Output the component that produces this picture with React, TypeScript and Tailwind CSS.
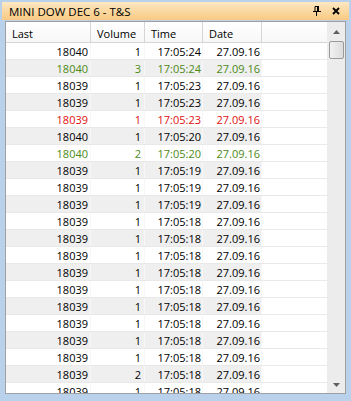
import { ReactNode } from "react";

type Row = { last: string; vol: string; time: string; color?: "green" | "red" };

const rows: Row[] = [
  { last: "18040", vol: "1", time: "17:05:24" },
  { last: "18040", vol: "3", time: "17:05:24", color: "green" },
  { last: "18039", vol: "1", time: "17:05:23" },
  { last: "18039", vol: "1", time: "17:05:23" },
  { last: "18039", vol: "1", time: "17:05:23", color: "red" },
  { last: "18040", vol: "1", time: "17:05:20" },
  { last: "18040", vol: "2", time: "17:05:20", color: "green" },
  { last: "18039", vol: "1", time: "17:05:19" },
  { last: "18039", vol: "1", time: "17:05:19" },
  { last: "18039", vol: "1", time: "17:05:19" },
  { last: "18039", vol: "1", time: "17:05:18" },
  { last: "18039", vol: "1", time: "17:05:18" },
  { last: "18039", vol: "1", time: "17:05:18" },
  { last: "18039", vol: "1", time: "17:05:18" },
  { last: "18039", vol: "1", time: "17:05:18" },
  { last: "18039", vol: "1", time: "17:05:18" },
  { last: "18039", vol: "1", time: "17:05:18" },
  { last: "18039", vol: "1", time: "17:05:18" },
  { last: "18039", vol: "1", time: "17:05:18" },
  { last: "18039", vol: "2", time: "17:05:18" },
  { last: "18039", vol: "1", time: "17:05:18" },
];

function HeadCell({ w, children }: { w: string; children?: ReactNode }) {
  return (
    <div className={`${w} shrink-0 h-full flex items-center pl-[6px] pt-[2px] border-r border-[#d5d5d5]`}>
      {children}
    </div>
  );
}

function Pin() {
  return (
    <svg width="8" height="10" viewBox="0 0 8 10" className="block">
      <path d="M2 0.5h3.5v5" fill="none" stroke="#000" strokeWidth="1" />
      <path d="M2 0.5v5" fill="none" stroke="#000" strokeWidth="1" />
      <rect x="4" y="0" width="2" height="6" fill="#000" />
      <rect x="0" y="5" width="8" height="1" fill="#000" />
      <rect x="3" y="6" width="1" height="4" fill="#000" />
    </svg>
  );
}

function Close() {
  return (
    <svg width="8" height="8" viewBox="0 0 8 8" className="block">
      <path d="M1 1L7 7M7 1L1 7" stroke="#000" strokeWidth="1.8" />
    </svg>
  );
}

export default function App() {
  return (
    <div
      className="w-[351px] h-[401px] bg-[#b9d1ea] pt-[2px] px-[2px] overflow-hidden text-[11px] leading-none text-black"
      style={{ fontFamily: '"Open Sans", "Noto Sans", sans-serif' }}
    >
      {/* title bar */}
      <div className="h-[18px] bg-gradient-to-b from-[#fde8c2] to-[#f8c981] flex items-center pl-[7px] pr-[9px]">
        <span className="flex-1 pt-[2px] text-[11.5px]">MINI DOW DEC 6 - T&amp;S</span>
        <div className="flex items-center gap-[11px]">
          <Pin />
          <Close />
        </div>
      </div>

      {/* grid panel */}
      <div className="mt-[1px] mx-[3px] h-[373px] border border-[#a0a0a0] bg-white flex overflow-hidden">
        <div className="flex-1 flex flex-col overflow-hidden">
          <div className="h-[21px] shrink-0 flex border-b border-[#d5d5d5] bg-gradient-to-b from-white to-[#f7f7f7]">
            <HeadCell w="w-[85px]">Last</HeadCell>
            <HeadCell w="w-[54px]">Volume</HeadCell>
            <HeadCell w="w-[58px]">Time</HeadCell>
            <HeadCell w="w-[59px]">Date</HeadCell>
            <div className="flex-1" />
          </div>
          {rows.map((r, i) => {
            const color =
              r.color === "green" ? "text-[#4c8a16]" : r.color === "red" ? "text-[#e01010]" : "text-black";
            const bg = i % 2 === 1 ? "bg-[#efefef]" : "bg-white";
            return (
              <div key={i} className={`h-[17px] shrink-0 flex ${bg} ${color} border-b border-[#e9e9e9]`}>
                <div className="w-[85px] shrink-0 flex items-center justify-end pr-[2px] pt-[1px] border-r border-[#f7f7f7]">{r.last}</div>
                <div className="w-[54px] shrink-0 flex items-center justify-end pr-[3px] pt-[1px] border-r border-[#f7f7f7]">{r.vol}</div>
                <div className="w-[58px] shrink-0 flex items-center justify-end pr-[1px] pt-[1px] border-r border-[#f7f7f7]">{r.time}</div>
                <div className="w-[59px] shrink-0 flex items-center justify-end pr-[1px] pt-[1px] border-r border-[#f7f7f7]">27.09.16</div>
                <div className="flex-1 bg-white" />
              </div>
            );
          })}
        </div>

        {/* scrollbar */}
        <div className="w-[18px] shrink-0 bg-[#ececec] flex flex-col items-center">
          <div className="h-[19px] w-full flex items-center justify-center">
            <svg width="7" height="4" viewBox="0 0 7 4">
              <path d="M3.5 0L7 4H0z" fill="#606060" />
            </svg>
          </div>
          <div className="w-[15px] h-[18px] rounded-[2px] border border-[#9a9a9a] bg-gradient-to-r from-[#f2f2f2] to-[#dcdcdc]" />
          <div className="flex-1" />
          <div className="h-[17px] w-full flex items-center justify-center">
            <svg width="7" height="4" viewBox="0 0 7 4">
              <path d="M0 0H7L3.5 4z" fill="#606060" />
            </svg>
          </div>
        </div>
      </div>
    </div>
  );
}
